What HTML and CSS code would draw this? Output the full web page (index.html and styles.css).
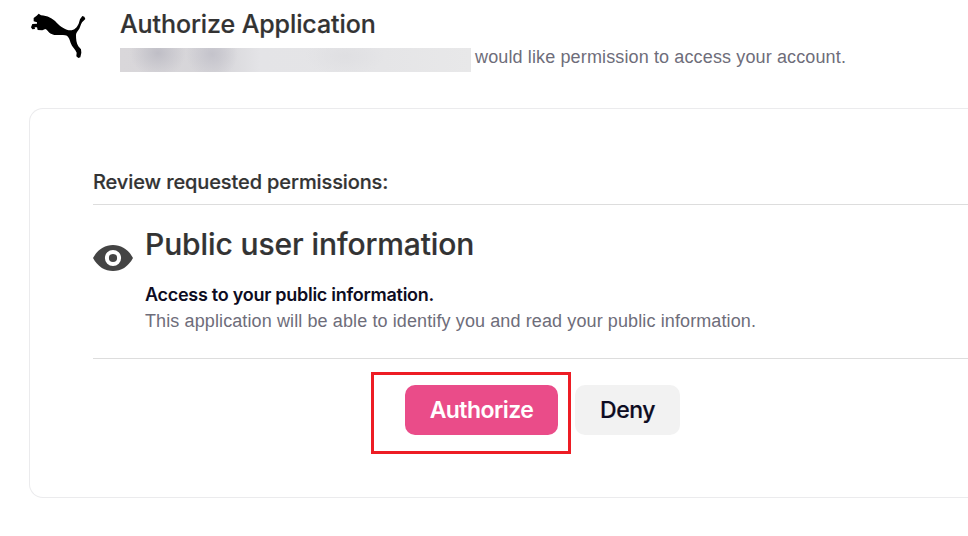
FILE: index.html
```html
<!DOCTYPE html>
<html lang="en">
<head>
<meta charset="utf-8">
<title>Authorize Application</title>
<link rel="stylesheet" href="styles.css">
</head>
<body>
<header class="header">
  <svg class="logo" viewBox="0 0 240 180" aria-hidden="true">
    <path d="M41 39 L50 32 L56 26 L63 31 C82 32 98 40 110 53 C122 65 138 76 151 76 C164 75 171 67 176 56 L180 43 L187 33 L193 35 L196 42 L190 48 C184 52 182 62 178 71 C173 79 168 83 168 90 C168 101 169 115 175 124 L183 133 L184 143 L181 157 L175 159 L169 154 L170 143 C166 133 156 126 152 114 C149 104 147 97 141 92 C133 88 122 91 108 90 C94 89 87 83 80 74 L76 72 L67 76 L53 75 L51 67 L44 67 L45 72 L37 73 L33 67 L37 57 L51 56 L51 52 L41 49 Z"/>
  </svg>
  <div class="intro">
    <h1 class="title">Authorize Application</h1>
    <p class="request"><span class="redacted"></span><span class="request-text">would like permission to access your account.</span></p>
  </div>
</header>
<main class="card">
  <h2 class="review">Review requested permissions:</h2>
  <section class="permission">
    <svg class="eye" viewBox="0 0 40 28" aria-hidden="true">
      <path fill="#444" d="M0 14 C5 5 12 1 20 1 C28 1 35 5 40 14 C35 23 28 27 20 27 C12 27 5 23 0 14Z"/>
      <circle cx="20" cy="14" r="6.1" fill="#444" stroke="#fff" stroke-width="4"/>
    </svg>
    <div class="details">
      <h3 class="name">Public user information</h3>
      <p class="access">Access to your public information.</p>
      <p class="description">This application will be able to identify you and read your public information.</p>
    </div>
  </section>
  <div class="actions">
    <div class="highlight"><button class="button primary">Authorize</button></div>
    <button class="button secondary">Deny</button>
  </div>
</main>
</body>
</html>
```
FILE: styles.css
```css
* { box-sizing: border-box; }
body { margin: 0; height: 536px; overflow: hidden; background: #fff; font-family: Inter, "Liberation Sans", sans-serif; }
h1, h2, h3, p { margin: 0; white-space: nowrap; }
.header { display: flex; height: 108px; padding: 5px 0 0 20px; }
.logo { width: 80px; height: 60px; flex: none; }
.intro { margin-left: 20px; }
.title { height: 43px; font-size: 25px; line-height: 38px; font-weight: 500; color: #333; letter-spacing: -0.1px; -webkit-text-stroke: 0.2px #333; }
.request { display: flex; height: 24px; }
.redacted { width: 351px; height: 24px; margin-right: 4px; background: radial-gradient(ellipse 28px 24px at 38px 5px, #bfbec6, transparent), radial-gradient(ellipse 26px 24px at 92px 6px, #c4c3cb, transparent), radial-gradient(ellipse 40px 20px at 225px 8px, #dfdfe2, transparent), linear-gradient(90deg, #d9d7da 0, #d6d5d9 28%, #e4e4e7 40%, #e5e5e7 75%, #e8e8e9); }
.request-text, .description { font-family: "Liberation Sans", sans-serif; font-size: 18px; color: #6e6d7a; }
.request-text { line-height: 18px; letter-spacing: 0.13px; }
.card { height: 390px; margin-left: 29px; padding: 62px 0 0 63px; border: 1px solid #ebebed; border-right: 0; border-radius: 14px 0 0 14px; }
.review { height: 34px; font-size: 20px; line-height: 22px; font-weight: 500; color: #333; letter-spacing: -0.11px; -webkit-text-stroke: 0.2px #333; border-bottom: 1px solid #ddd; }
.permission { display: flex; height: 154px; border-bottom: 1px solid #ddd; }
.eye { width: 40px; height: 28px; margin-top: 39px; flex: none; }
.details { margin-left: 12px; }
.name { height: 77px; font-size: 30px; line-height: 79px; font-weight: 500; color: #333; letter-spacing: -0.1px; -webkit-text-stroke: 0.2px #333; }
.access { height: 26px; font-size: 18px; line-height: 26px; font-weight: 600; color: #0d0c22; letter-spacing: -0.27px; }
.description { line-height: 26px; letter-spacing: 0.11px; }
.actions { display: flex; margin: 13px 0 0 278px; }
.highlight { width: 200px; height: 82px; padding: 10px 0 0 31px; border: 3px solid #ed1c24; }
.button { display: block; height: 50px; padding: 0; border: 0; border-radius: 10px; font: 500 23px/50px Inter, sans-serif; }
.primary { width: 153px; background: #ea4c89; color: #fff; font-weight: 600; letter-spacing: -0.55px; }
.secondary { width: 105px; margin: 13px 0 0 4px; background: #f2f2f2; color: #0d0c22; letter-spacing: -0.5px; -webkit-text-stroke: 0.2px #0d0c22; }
```
